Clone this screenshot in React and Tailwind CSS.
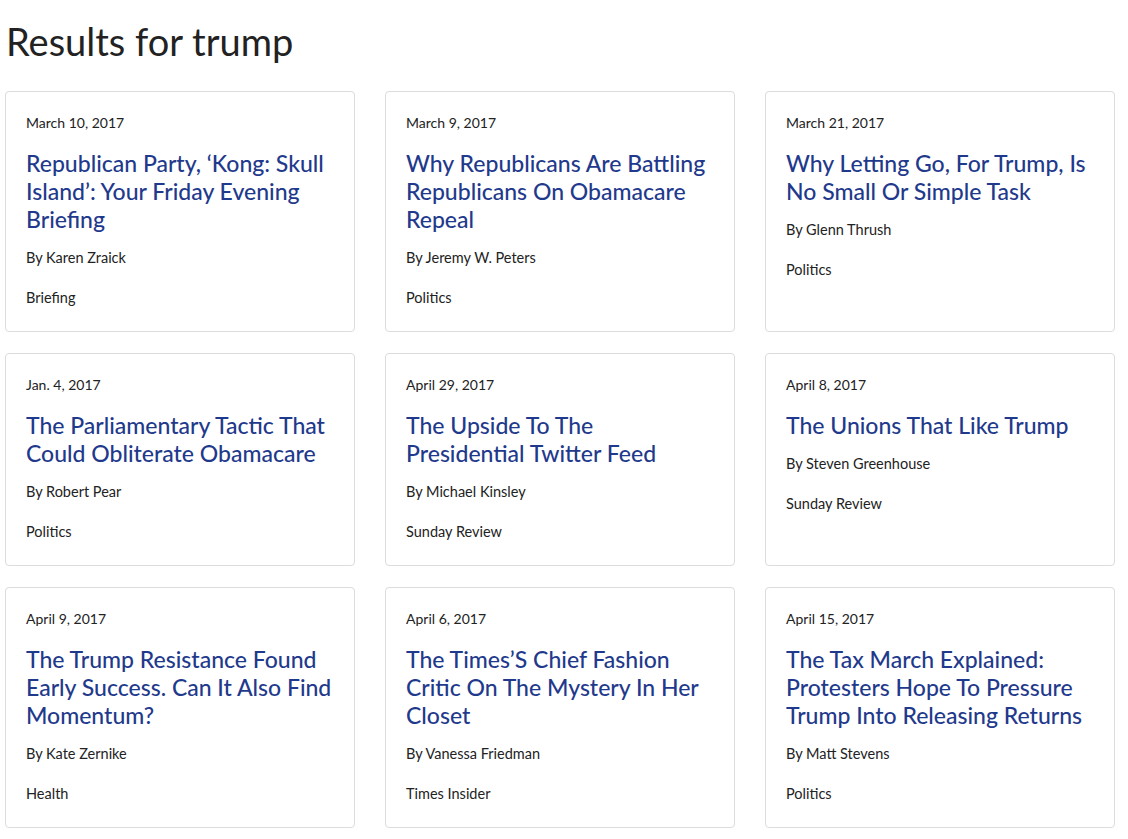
import React from "react";

const articles = [
  { date: "March 10, 2017", title: "Republican Party, ‘Kong: Skull Island’: Your Friday Evening Briefing", by: "Karen Zraick", section: "Briefing" },
  { date: "March 9, 2017", title: "Why Republicans Are Battling Republicans On Obamacare Repeal", by: "Jeremy W. Peters", section: "Politics" },
  { date: "March 21, 2017", title: "Why Letting Go, For Trump, Is No Small Or Simple Task", by: "Glenn Thrush", section: "Politics" },
  { date: "Jan. 4, 2017", title: "The Parliamentary Tactic That Could Obliterate Obamacare", by: "Robert Pear", section: "Politics" },
  { date: "April 29, 2017", title: "The Upside To The Presidential Twitter Feed", by: "Michael Kinsley", section: "Sunday Review" },
  { date: "April 8, 2017", title: "The Unions That Like Trump", by: "Steven Greenhouse", section: "Sunday Review" },
  { date: "April 9, 2017", title: "The Trump Resistance Found Early Success. Can It Also Find Momentum?", by: "Kate Zernike", section: "Health" },
  { date: "April 6, 2017", title: "The Times’S Chief Fashion Critic On The Mystery In Her Closet", by: "Vanessa Friedman", section: "Times Insider" },
  { date: "April 15, 2017", title: "The Tax March Explained: Protesters Hope To Pressure Trump Into Releasing Returns", by: "Matt Stevens", section: "Politics" },
];

function Card({ a }) {
  return (
    <div className="border border-[#dcdcdc] rounded-[4px] bg-white pt-[20px] pb-[22px] px-[20px]">
      <div className="text-[14px] leading-[22px] text-[#222]">{a.date}</div>
      <h3 className="mt-[15px] text-[23px] leading-[28px] text-[#1f3a8c] font-medium">{a.title}</h3>
      <div className="mt-[14px] text-[14.5px] leading-[22px] text-[#222]">By {a.by}</div>
      <div className="mt-[18px] text-[14.5px] leading-[22px] text-[#222]">{a.section}</div>
    </div>
  );
}

export default function App() {
  return (
    <div className="bg-white min-h-screen px-[5px] font-['Lato',sans-serif]">
      <h1 className="pt-[15px] pb-[24px] text-[38px] leading-[52px] text-[#222] pl-[1px]">Results for trump</h1>
      <div className="grid grid-cols-[350px_350px_350px] gap-x-[30px] gap-y-[21px]">
        {articles.map((a) => (
          <Card key={a.title} a={a} />
        ))}
      </div>
    </div>
  );
}
